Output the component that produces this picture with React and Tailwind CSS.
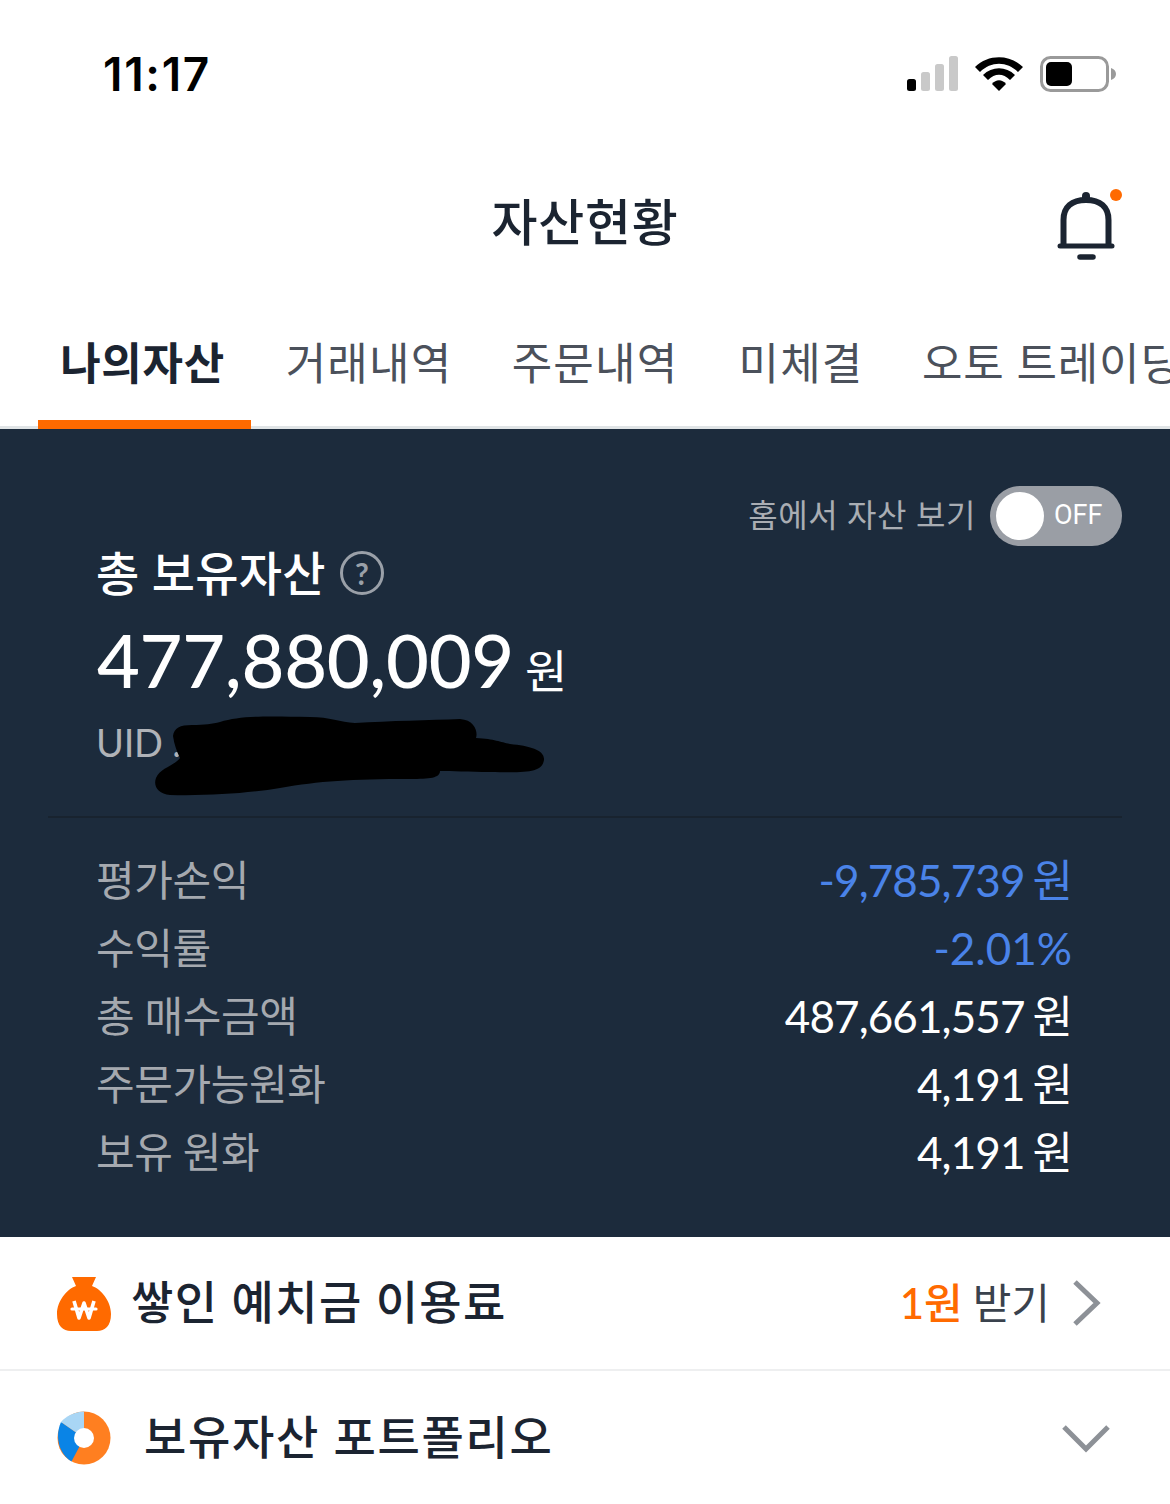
import React from "react";

const font = { fontFamily: 'Lato, "Noto Sans CJK KR", sans-serif' };

function Rows() {
  const rows = [
    ["평가손익", "-9,785,739 원", "text-[#4a83e8] tracking-[-0.9px]"],
    ["수익률", "-2.01%", "text-[#4a83e8] tracking-[0px]"],
    ["총 매수금액", "487,661,557 원", "text-white tracking-[-0.9px]"],
    ["주문가능원화", "4,191 원", "text-white tracking-[-0.9px]"],
    ["보유 원화", "4,191 원", "text-white tracking-[-0.9px]"],
  ];
  return (
    <div className="flex flex-col pl-[96px] pr-[98px] pt-[28px]">
      {rows.map(([l, v, c]) => (
        <div key={l} className="flex h-[68px] items-center justify-between">
          <span className="text-[42px] leading-none text-[#a5a9af] tracking-[-0.4px]">{l}</span>
          <span className={`text-[44px] leading-none [word-spacing:-2.5px] ${c}`}>{v}</span>
        </div>
      ))}
    </div>
  );
}

export default function App() {
  return (
    <div style={font} className="w-[1170px] h-[1504px] bg-white overflow-hidden flex flex-col text-[#1b2431]">
      {/* status bar */}
      <div className="h-[150px] flex items-start justify-between pl-[103px] pr-[54px] pt-[46px]">
        <span style={{ fontFamily: 'Inter, sans-serif' }} className="text-[46px] leading-[56px] font-semibold text-black tracking-[1.7px]">11:17</span>
        <div className="flex items-start gap-[16px] pt-[10px]">
          <svg width="52" height="36" viewBox="0 0 52 36">
            <rect x="1" y="23" width="9" height="12" rx="2.5" fill="#000" />
            <rect x="15" y="16" width="9" height="19" rx="2.5" fill="#c9c9c9" />
            <rect x="29" y="8" width="9" height="27" rx="2.5" fill="#c9c9c9" />
            <rect x="43" y="0" width="9" height="35" rx="2.5" fill="#c9c9c9" />
          </svg>
          <svg width="50" height="36" viewBox="0 0 50 36">
            <path d="M1 11 C14 -2 36 -2 49 11 L44 16 C33 5 17 5 6 16 Z" fill="#000" />
            <path d="M9 19 C18 10 32 10 41 19 L36 24 C29 17 21 17 14 24 Z" fill="#000" />
            <path d="M18 28 C22 23 28 23 32 28 L25 35 Z" fill="#000" />
          </svg>
          <svg width="76" height="36" viewBox="0 0 76 36">
            <rect x="1.5" y="1.5" width="66" height="33" rx="9" fill="none" stroke="#9a9a9a" strokeWidth="3" />
            <rect x="6" y="6" width="26" height="24" rx="5" fill="#000" />
            <path d="M71 12 C74 13 76 15 76 18 C76 21 74 23 71 24 Z" fill="#9a9a9a" />
          </svg>
        </div>
      </div>

      {/* header */}
      <div className="relative h-[140px] flex items-center justify-center shrink-0">
        <span className="text-[50px] leading-none font-medium tracking-[0.7px] relative top-[2px]">자산현황</span>
        <svg className="absolute left-[1054px] top-[36px]" width="72" height="76" viewBox="0 0 72 76" fill="none">
          <circle cx="62" cy="9" r="6" fill="#ff6a00" />
          <path d="M9.5 60 V34 C9.5 21 18 14 32 14 C46 14 54.5 21 54.5 34 V60" stroke="#1b2431" strokeWidth="6" />
          <path d="M32 13 V10" stroke="#1b2431" strokeWidth="8" strokeLinecap="round" />
          <path d="M6 60 H58" stroke="#1b2431" strokeWidth="5" strokeLinecap="round" />
          <path d="M26 71 H39" stroke="#1b2431" strokeWidth="5.5" strokeLinecap="round" />
        </svg>
      </div>

      {/* tabs */}
      <div className="h-[139px] shrink-0 flex items-stretch pl-[38px] border-b-[3px] border-[#e0e4e6] whitespace-nowrap pt-[30px]">
        <div className="w-[213px] shrink-0 flex items-start justify-center border-b-[9px] border-[#ff6a00] mb-[-3px] pt-[15px]">
          <span className="text-[44px] leading-[56px] font-bold tracking-[0.7px] relative left-[-2px]">나의자산</span>
        </div>
        <div className="ml-[5px] w-[226px] shrink-0 flex justify-center pt-[15px]">
          <span className="text-[44px] leading-[56px] text-[#4b515b] tracking-[1.2px]">거래내역</span>
        </div>
        <div className="w-[226px] shrink-0 flex justify-center pt-[15px]">
          <span className="text-[44px] leading-[56px] text-[#4b515b] tracking-[1.2px]">주문내역</span>
        </div>
        <div className="w-[186px] shrink-0 flex justify-center pt-[15px]">
          <span className="text-[44px] leading-[56px] text-[#4b515b] tracking-[1.2px]">미체결</span>
        </div>
        <div className="shrink-0 pt-[15px] pl-[28px]">
          <span className="text-[44px] leading-[56px] text-[#4b515b] tracking-[0.75px]">오토 트레이딩</span>
        </div>
      </div>

      {/* panel */}
      <div className="h-[808px] shrink-0 bg-[#1c2b3c] relative flex flex-col">
        <div className="h-[389px] shrink-0 relative pt-[117px] border-b-2 border-[#18232f] mx-[48px] pl-[49px]">
          <div className="flex items-center gap-[14px] h-[54px] ml-[-1px]">
            <span className="text-[47px] leading-none font-medium text-white tracking-[0.3px]">총 보유자산</span>
            <span className="w-[44px] h-[44px] rounded-full border-[3px] border-[#9aa0a8] flex items-center justify-center text-[30px] font-bold text-[#9aa0a8] leading-none">?</span>
          </div>
          <div className="flex items-baseline mt-[24px] h-[72px]">
            <span className="text-[74px] leading-[72px] font-medium text-white tracking-[-0.3px]">477,880,009</span>
            <span className="text-[46px] leading-none text-white ml-[11px]">원</span>
          </div>
          <div className="text-[38px] leading-[48px] text-[#b0b3b8] mt-[22px] ml-[-1px] tracking-[-0.3px]">UID :</div>
        </div>
        <div className="absolute right-[48px] top-[57px] flex items-center gap-[15px]">
          <span className="text-[32px] leading-none text-[#a9adb3] tracking-[0.6px] relative top-[-1px] left-[1px]">홈에서 자산 보기</span>
          <div className="w-[132px] h-[60px] rounded-full bg-[#9a9ea5] flex items-center pl-[6px] gap-[10px]">
            <span className="w-[48px] h-[48px] rounded-full bg-white" />
            <span style={{ fontFamily: 'Roboto, sans-serif' }} className="text-[27px] leading-none text-white relative top-[-1px]">OFF</span>
          </div>
        </div>
        <svg className="absolute left-[150px] top-[285px]" width="400" height="85" viewBox="0 0 400 85">
          <path fill="#000" d="M23 22 C24 14 30 11 42 11 C55 11 62 10 70 8 C90 2 110 2 160 3 C180 3 190 8 205 9 C240 7 280 6 310 5 C325 6 328 18 326 24 C345 25 350 28 360 30 C380 32 395 36 394 46 C392 58 380 59 340 58 C320 58 300 57 290 57 C290 64 280 65 260 65 C200 65 170 67 130 74 C100 79 60 82 20 81 C8 80 3 72 6 64 C10 54 24 52 30 44 C27 38 24 30 23 22 Z" />
        </svg>
        <Rows />
      </div>

      {/* row 1 */}
      <div className="h-[134px] shrink-0 flex items-center pl-[57px] pr-[68px] border-b-2 border-[#eeeff0]">
        <svg width="54" height="56" viewBox="0 0 54 56" className="shrink-0 mt-[2px]">
          <path fill="#ff6a00" d="M15 1 H39 L35 10 C44 13 54 25 54 38 C54 50 48 55 40 55 H14 C6 55 0 50 0 38 C0 25 10 13 19 10 Z" />
          <path fill="none" stroke="#fff" strokeWidth="3.6" strokeLinejoin="round" d="M17 25 L22 42 L27 27 L32 42 L37 25" />
          <path stroke="#fff" strokeWidth="3.2" strokeLinecap="round" d="M15 33 H39" />
        </svg>
        <span className="ml-[20px] text-[46px] leading-none font-medium tracking-[1.4px] relative top-[-1px]">쌓인 예치금 이용료</span>
        <div className="ml-auto flex items-center">
          <span className="text-[42px] leading-none font-medium text-[#ff6a00] relative left-[4px]">1원</span>
          <span className="text-[42px] leading-none text-[#3a424d] ml-[14px]">받기</span>
          <svg width="30" height="48" viewBox="0 0 30 48" className="ml-[22px]" fill="none">
            <path d="M3 3 L25 24 L3 45" stroke="#8d9197" strokeWidth="5" />
          </svg>
        </div>
      </div>

      {/* row 2 */}
      <div className="flex-1 flex items-center pl-[57px] pr-[59px]">
        <svg width="54" height="54" viewBox="0 0 54 54" className="shrink-0">
          <circle cx="27" cy="27" r="26.5" fill="#ff7f20" />
          <path fill="#0a84e6" d="M27 27 L14.5 50.5 C3 44 -3 27 4 11 Z" />
          <path fill="#a9d6f5" d="M27 27 L4 11 C9 5 17 1 27 0.5 Z" />
          <circle cx="27" cy="27" r="10" fill="#fff" />
        </svg>
        <span className="ml-[33px] text-[46px] leading-none font-medium tracking-[1.7px] relative top-[-1px]">보유자산 포트폴리오</span>
        <svg width="50" height="30" viewBox="0 0 50 30" className="ml-auto" fill="none">
          <path d="M3 4 L25 26 L47 4" stroke="#8d9197" strokeWidth="5" />
        </svg>
      </div>
    </div>
  );
}
